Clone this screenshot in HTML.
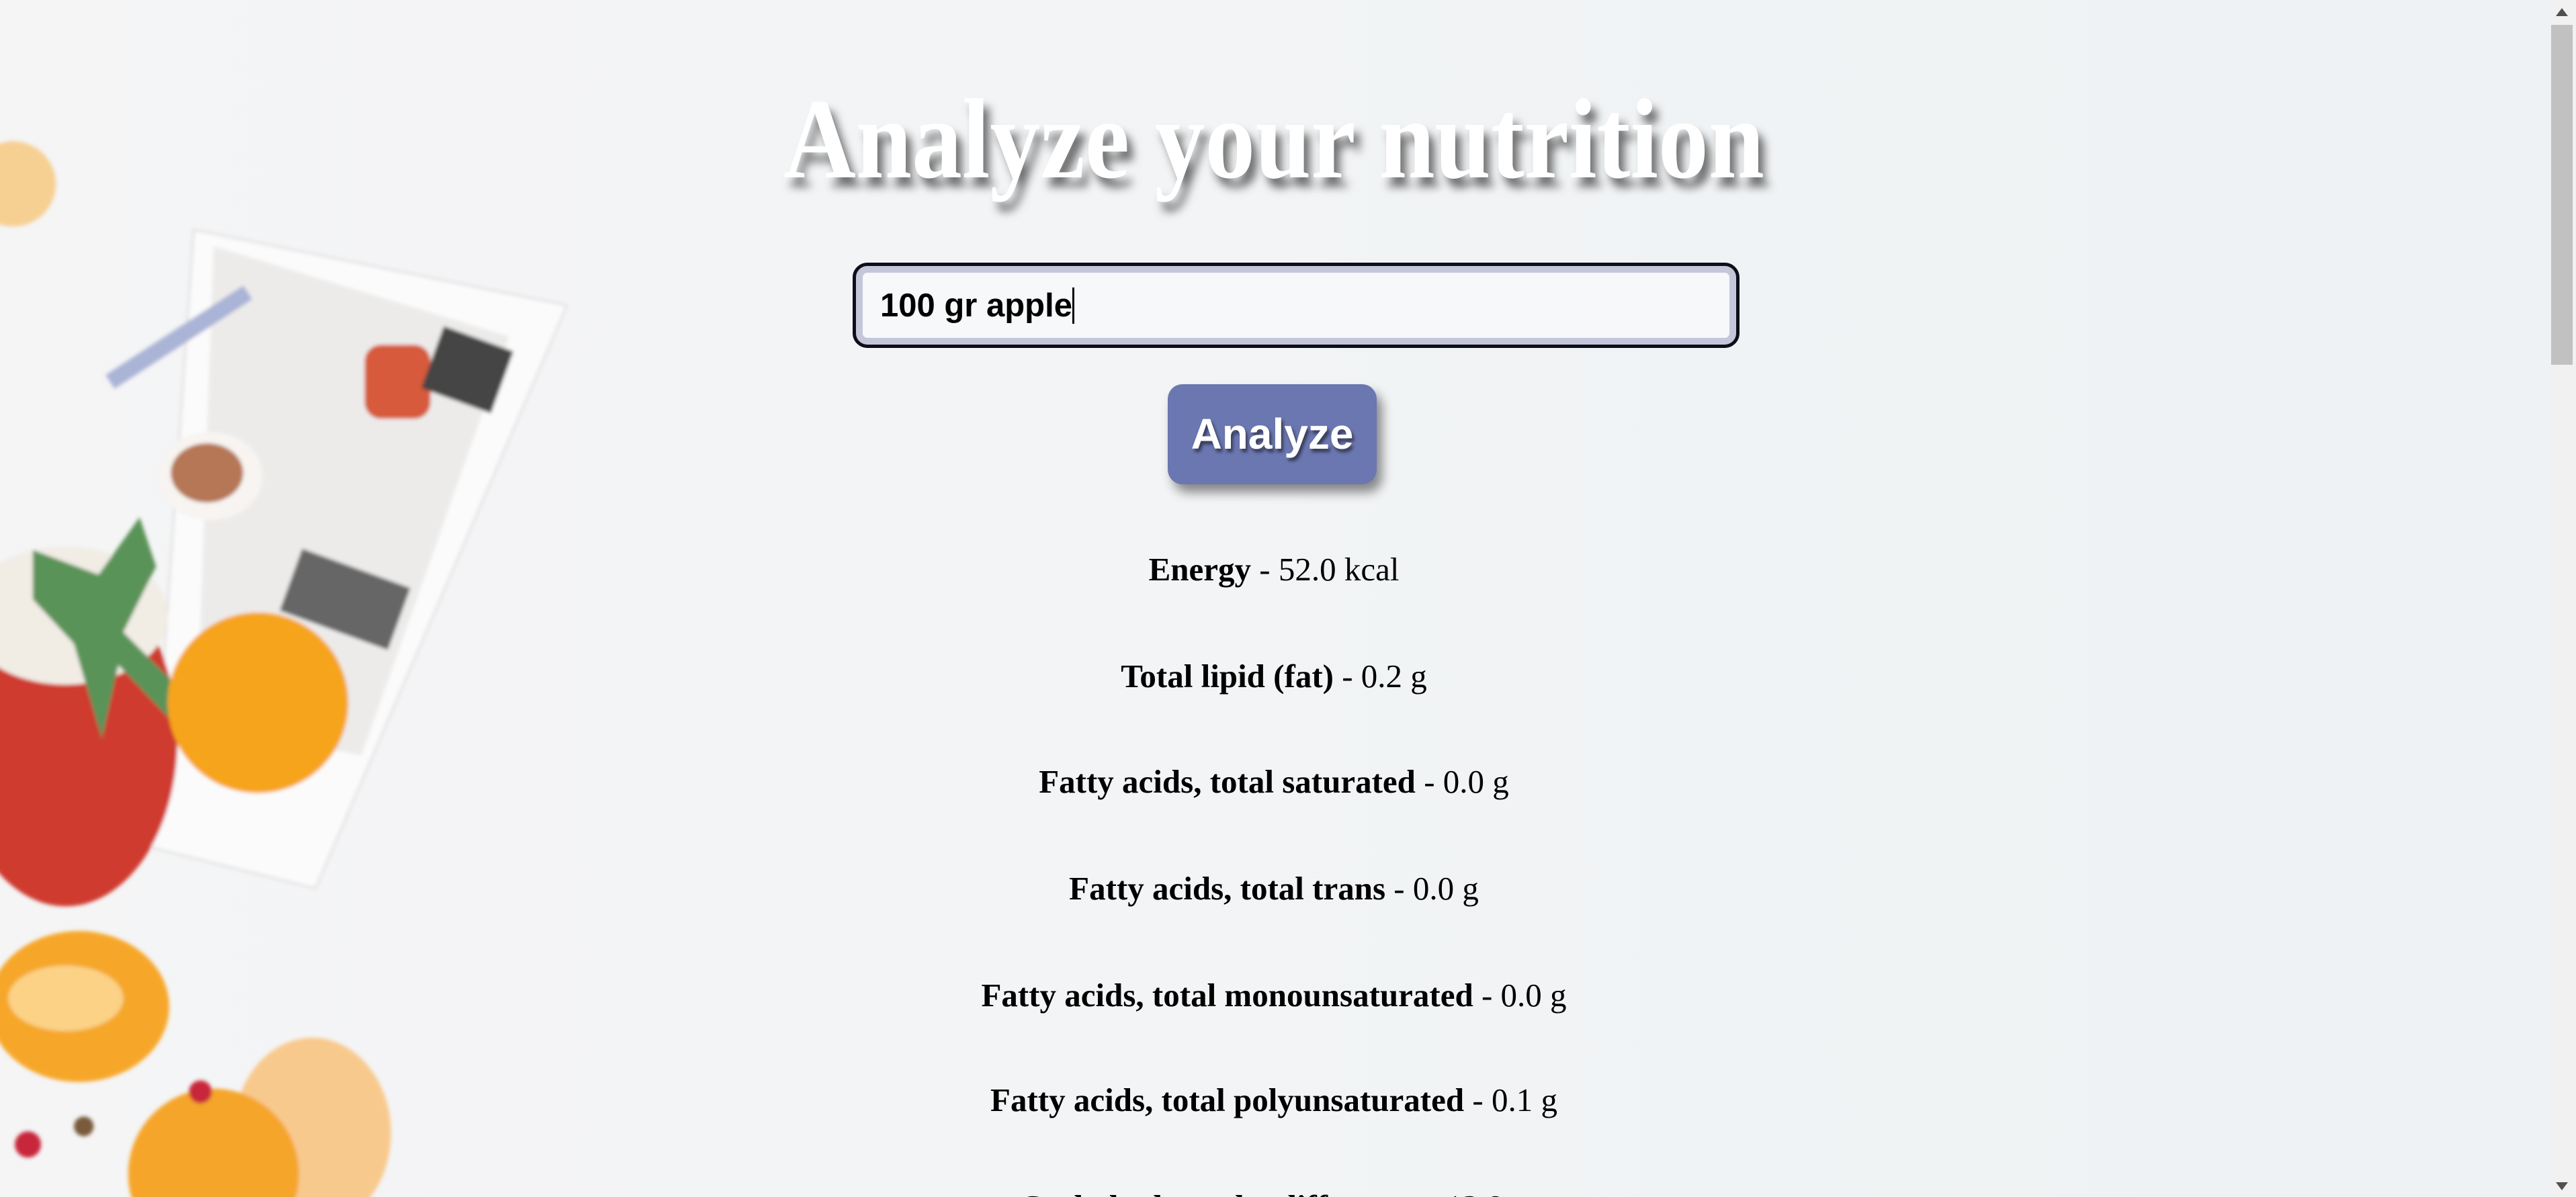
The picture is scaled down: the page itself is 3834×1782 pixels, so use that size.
<!DOCTYPE html>
<html><head><meta charset="utf-8"><style>
html,body{margin:0;padding:0;width:3834px;height:1782px;overflow:hidden;background:#eef1f3;}
body{position:relative;font-family:"Liberation Serif",serif;}
#bg{position:absolute;left:0;top:0;width:3834px;height:1782px;}
.title{position:absolute;left:0;width:3792px;top:112px;text-align:center;font-weight:bold;font-size:170px;line-height:190px;color:#fff;text-shadow:10px 14px 14px rgba(0,0,0,.55);transform:scaleX(.88);transform-origin:1896px 0;}
.inp{position:absolute;left:1269px;top:391px;width:1310px;height:117px;border:5px solid #0e0e1a;border-radius:22px;background:#f6f8f9;box-shadow:inset 0 0 0 10px #c4c7da;}
.inp span{position:absolute;left:36px;top:31px;font-family:"Liberation Sans",sans-serif;font-weight:bold;font-size:49px;line-height:56px;color:#000;}
.inp i{position:absolute;left:322px;top:32px;width:3px;height:54px;background:#000;}
.btn{position:absolute;left:1738px;top:572px;width:311px;height:149px;background:#6b77b0;border-radius:22px;box-shadow:8px 12px 16px rgba(0,0,0,.45);text-align:center;font-family:"Liberation Sans",sans-serif;font-weight:bold;font-size:64px;line-height:149px;color:#fff;text-shadow:3px 5px 5px rgba(0,0,0,.5);}
.n{position:absolute;left:0;width:3792px;text-align:center;font-size:49px;line-height:60px;color:#000;white-space:nowrap;overflow:hidden;}
.n b{font-weight:bold;}
#sb{position:absolute;left:3792px;top:0;width:42px;height:1782px;background:#f1f1f1;}
#th{position:absolute;left:3797px;top:37px;width:32px;height:506px;background:#c1c1c1;}
</style></head><body>
<svg id="bg" viewBox="0 0 1568 729" preserveAspectRatio="none">
<defs><filter id="bl"><feGaussianBlur stdDeviation="1.2"/></filter>
<linearGradient id="g" x1="0" x2="1"><stop offset="0" stop-color="#f5f5f6"/><stop offset="1" stop-color="#eef2f4"/></linearGradient></defs>
<rect width="1568" height="729" fill="url(#g)"/>
<g filter="url(#bl)">
<circle cx="8" cy="112" r="26" fill="#f6c77a" opacity=".8"/>
<polygon points="118,140 345,186 192,541 92,516" fill="#fbfbfb" stroke="#d9d9d9"/>
<polygon points="130,150 310,205 220,460 120,440" fill="#ecebea"/>
<rect x="60" y="200" width="100" height="10" fill="#aab4d6" transform="rotate(-33 110 207)"/>
<ellipse cx="128" cy="290" rx="32" ry="27" fill="#f7f4f1"/>
<ellipse cx="126" cy="288" rx="22" ry="18" fill="#b57756"/>
<rect x="222" y="210" width="40" height="45" fill="#d65a3a" rx="10"/>
<rect x="262" y="205" width="45" height="40" fill="#444" transform="rotate(20 284 225)"/>
<rect x="175" y="345" width="70" height="40" fill="#666" transform="rotate(20 210 365)"/>
<ellipse cx="40" cy="450" rx="68" ry="102" fill="#cf3a2e"/>
<ellipse cx="40" cy="375" rx="62" ry="42" fill="#f1ece4"/>
<path d="M20,335 L60,350 L85,315 L95,345 L75,385 L130,440 L110,445 L72,405 L62,450 L45,392 L20,365 Z" fill="#5a9358"/>
<circle cx="157" cy="428" r="55" fill="#f6a41f"/>
<ellipse cx="48" cy="613" rx="55" ry="46" fill="#f6a72a"/>
<ellipse cx="40" cy="608" rx="35" ry="20" fill="#fbd286"/>
<ellipse cx="190" cy="690" rx="48" ry="58" fill="#f8c98d"/>
<circle cx="130" cy="715" r="52" fill="#f5a52a"/>
<circle cx="122" cy="665" r="7" fill="#c8283a"/>
<circle cx="17" cy="697" r="8" fill="#c8283a"/>
<circle cx="51" cy="686" r="6" fill="#7a5a3a"/>
</g>
</svg>
<div class="title">Analyze your nutrition</div>
<div class="inp"><span>100 gr apple</span><i></i></div>
<div class="btn">Analyze</div>
<div class="n" style="top:818px"><b>Energy</b> - 52.0 kcal</div>
<div class="n" style="top:977px"><b>Total lipid (fat)</b> - 0.2 g</div>
<div class="n" style="top:1134px"><b>Fatty acids, total saturated</b> - 0.0 g</div>
<div class="n" style="top:1293px"><b>Fatty acids, total trans</b> - 0.0 g</div>
<div class="n" style="top:1452px"><b>Fatty acids, total monounsaturated</b> - 0.0 g</div>
<div class="n" style="top:1608px"><b>Fatty acids, total polyunsaturated</b> - 0.1 g</div>
<div class="n" style="top:1767px;height:15px"><b>Carbohydrate, by difference</b> - 13.8 g</div>
<div id="sb"></div><div id="th"></div>
<svg style="position:absolute;left:3800px;top:8px" width="26" height="20"><polygon points="13,4 4,16 22,16" fill="#505050"/></svg>
<svg style="position:absolute;left:3800px;top:1756px" width="26" height="20"><polygon points="13,16 4,4 22,4" fill="#505050"/></svg>
</body></html>
